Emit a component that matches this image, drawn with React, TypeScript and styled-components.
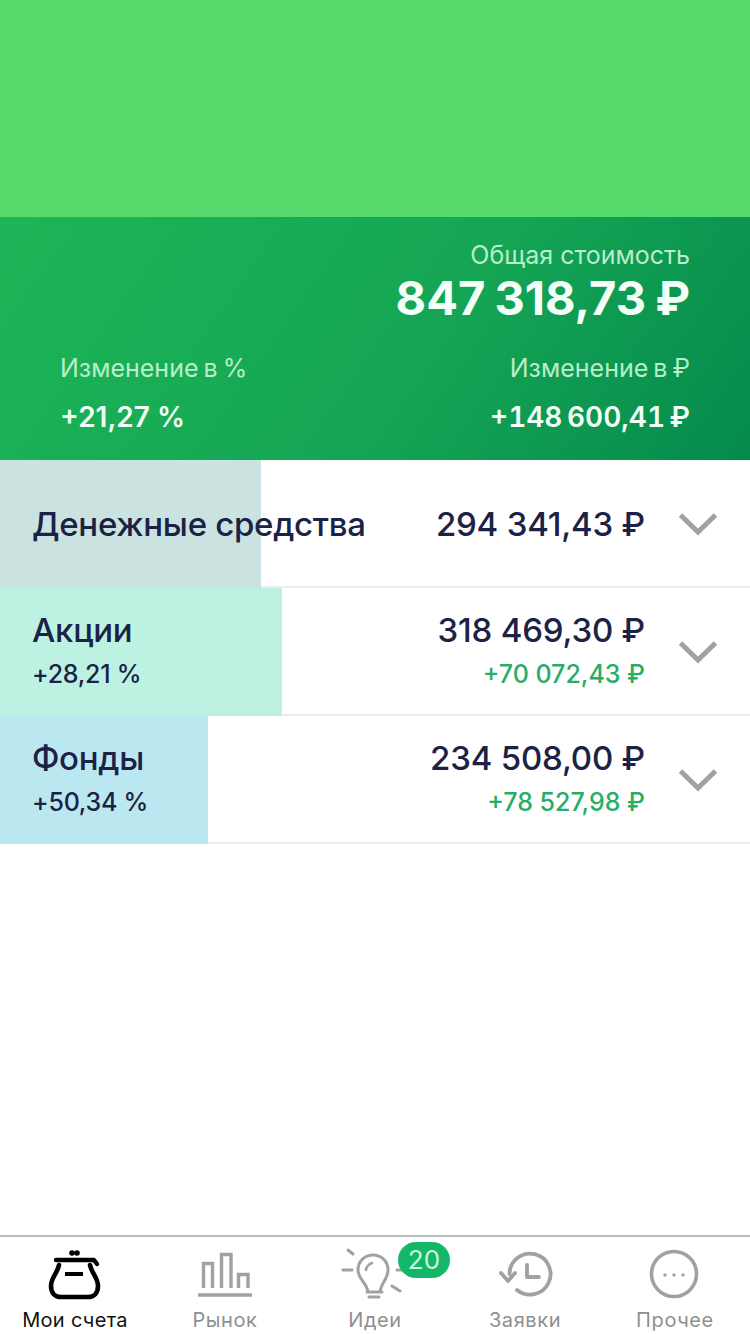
import React from "react";
import styled, { createGlobalStyle } from "styled-components";

const Global = createGlobalStyle`
  html, body { margin: 0; padding: 0; background: #fff; }
  body { font-family: Inter, "Noto Sans", sans-serif; }
  * { box-sizing: border-box; }
`;

const Page = styled.div`
  width: 750px;
  height: 1334px;
  display: flex;
  flex-direction: column;
  overflow: hidden;
  background: #fff;
`;
const Banner = styled.div`
  height: 217px;
  flex: none;
  background: #57da6c;
`;
const Summary = styled.section`
  height: 243px;
  flex: none;
  padding: 21px 60px 0;
  background: linear-gradient(125deg, #1db556 0%, #15a655 55%, #058a4c 100%);
  display: flex;
  flex-direction: column;
`;
const TotalBlock = styled.div`
  display: flex;
  flex-direction: column;
  align-items: flex-end;
`;
const SummaryLabel = styled.div`
  font-size: 25px;
  line-height: 34px;
  color: #b9eeca;
  white-space: nowrap;
`;
const ChangeLabel = styled(SummaryLabel)`
  word-spacing: -2px;
`;
const TotalValue = styled.div`
  font-size: 47px;
  line-height: 58px;
  font-weight: 700;
  word-spacing: -2px;
  color: #f4fff8;
  white-space: nowrap;
  margin-top: -3px;
`;
const ChangeGrid = styled.div`
  display: flex;
  justify-content: space-between;
  margin-top: 24px;
`;
const ChangeCol = styled.div<{ $end?: boolean }>`
  display: flex;
  flex-direction: column;
  gap: 15px;
  align-items: ${(p) => (p.$end ? "flex-end" : "flex-start")};
`;
const ChangeValue = styled.div<{ $tabular?: boolean }>`
  font-size: 28px;
  line-height: 34px;
  font-weight: 600;
  font-feature-settings: ${(p) => (p.$tabular ? '"tnum"' : "normal")};
  word-spacing: ${(p) => (p.$tabular ? "-3px" : "0")};
  color: #f0fff5;
  white-space: nowrap;
`;
const List = styled.div`
  flex: 1;
`;
const Row = styled.div<{ $fill: string; $w: number }>`
  height: 128px;
  display: flex;
  align-items: center;
  padding: 1px 32px 2px;
  background:
    linear-gradient(to right, ${(p) => p.$fill} ${(p) => p.$w}px, transparent ${(p) => p.$w}px),
    linear-gradient(#ececee, #ececee) left bottom / 100% 2px no-repeat;
`;
const Names = styled.div`
  flex: 1;
  display: flex;
  flex-direction: column;
  gap: 6px;
`;
const Values = styled.div`
  display: flex;
  flex-direction: column;
  align-items: flex-end;
  gap: 6px;
  margin-right: 33px;
`;
const Name = styled.div`
  font-size: 33px;
  line-height: 38px;
  font-weight: 550;
  letter-spacing: -0.3px;
  color: #1b2245;
  white-space: nowrap;
`;
const Pct = styled.div`
  font-size: 25px;
  line-height: 38px;
  font-weight: 450;
  letter-spacing: -0.25px;
  color: #1b2245;
  white-space: nowrap;
`;
const Amount = styled.div`
  font-size: 33px;
  line-height: 38px;
  font-weight: 550;
  letter-spacing: -0.2px;
  color: #1b2245;
  white-space: nowrap;
`;
const Gain = styled.div`
  font-size: 25px;
  line-height: 38px;
  font-weight: 500;
  color: #27ad66;
  white-space: nowrap;
`;
const Chevron = styled.svg`
  width: 40px;
  height: 24px;
  flex: none;
`;
const TabBar = styled.nav`
  height: 99px;
  flex: none;
  display: grid;
  grid-template-columns: repeat(5, 150px);
  border-top: 2px solid #b9b9b9;
  background: #fff;
`;
const Tab = styled.div`
  position: relative;
  display: flex;
  flex-direction: column;
  align-items: center;
  padding-top: 10px;
`;
const TabIcon = styled.svg`
  width: 60px;
  height: 54px;
  flex: none;
  overflow: visible;
`;
const TabLabel = styled.div<{ $active?: boolean }>`
  margin-top: 7px;
  font-size: 20px;
  line-height: 24px;
  font-weight: 400;
  letter-spacing: ${(p) => (p.$active ? "0.3px" : "0.6px")};
  color: ${(p) => (p.$active ? "#111" : "#8f8f8f")};
  white-space: nowrap;
`;
const Badge = styled.div`
  position: absolute;
  left: 98px;
  top: 5px;
  width: 52px;
  height: 36px;
  border-radius: 18px;
  background: #12b768;
  color: #c9f7da;
  font-size: 26px;
  line-height: 36px;
  text-align: center;
`;

const rows = [
  { name: "Денежные средства", amount: "294 341,43 ₽", fill: "#cbe3e0", w: 261 },
  { name: "Акции", pct: "+28,21 %", amount: "318 469,30 ₽", gain: "+70 072,43 ₽", fill: "#bdf2e3", w: 282 },
  { name: "Фонды", pct: "+50,34 %", amount: "234 508,00 ₽", gain: "+78 527,98 ₽", fill: "#bbe8f0", w: 208 },
];

const G = "#a1a1a1";

export default function App() {
  return (
    <Page>
      <Global />
      <Banner />
      <Summary>
        <TotalBlock>
          <SummaryLabel>Общая стоимость</SummaryLabel>
          <TotalValue>847 318,73 ₽</TotalValue>
        </TotalBlock>
        <ChangeGrid>
          <ChangeCol>
            <ChangeLabel>Изменение в %</ChangeLabel>
            <ChangeValue>+21,27 %</ChangeValue>
          </ChangeCol>
          <ChangeCol $end>
            <ChangeLabel>Изменение в ₽</ChangeLabel>
            <ChangeValue $tabular>+148 600,41 ₽</ChangeValue>
          </ChangeCol>
        </ChangeGrid>
      </Summary>
      <List>
        {rows.map((r) => (
          <Row key={r.name} $fill={r.fill} $w={r.w}>
            <Names>
              <Name>{r.name}</Name>
              {r.pct && <Pct>{r.pct}</Pct>}
            </Names>
            <Values>
              <Amount>{r.amount}</Amount>
              {r.gain && <Gain>{r.gain}</Gain>}
            </Values>
            <Chevron viewBox="0 0 40 24" fill="none">
              <path d="M2.5 3 L20 20 L37.5 3" stroke={G} strokeWidth="5" />
            </Chevron>
          </Row>
        ))}
      </List>
      <TabBar>
        <Tab>
          <TabIcon viewBox="0 0 60 54" fill="none">
            <circle cx="27" cy="6" r="2.8" fill="#000" />
            <circle cx="32" cy="6" r="2.8" fill="#000" />
            <path d="M11 13 H49 L52 17" stroke="#000" strokeWidth="4.4" strokeLinecap="round" strokeLinejoin="round" />
            <path
              d="M14 18 C12 27 6 31 6 39 C6 46 10 50 16 50 H43 C49 50 53 46 53 39 C53 31 47 27 45 18"
              stroke="#000"
              strokeWidth="4.6"
              strokeLinecap="round"
            />
            <path d="M20 27 H38" stroke="#000" strokeWidth="4" />
          </TabIcon>
          <TabLabel $active>Мои счета</TabLabel>
        </Tab>
        <Tab>
          <TabIcon viewBox="0 0 60 54" fill="none">
            <path d="M8.5 41 V16.5 H17.5 V41 M26.5 41 V7.5 H36 V41 M43.5 41 V27.5 H53 V41" stroke={G} strokeWidth="3.4" />
            <path d="M3 48 H57" stroke={G} strokeWidth="3.6" />
          </TabIcon>
          <TabLabel>Рынок</TabLabel>
        </Tab>
        <Tab>
          <TabIcon viewBox="0 0 60 54" fill="none">
            <path d="M3 3 L8 7 M-2 23 H7 M47 39 L55 44 M52 23 H56" stroke={G} strokeWidth="3" strokeLinecap="round" />
            <path
              d="M23 45 C22 36 13 32 13 23 C13 14 20 8 28 8 C36 8 43 14 43 23 C43 32 36 36 35 45"
              stroke={G}
              strokeWidth="3"
            />
            <path d="M21 23 C21 20 24 17 27 16" stroke={G} strokeWidth="2.6" strokeLinecap="round" />
            <path d="M22 45 H37 M24 50 H34" stroke={G} strokeWidth="3" strokeLinecap="round" />
          </TabIcon>
          <Badge>20</Badge>
          <TabLabel>Идеи</TabLabel>
        </Tab>
        <Tab>
          <TabIcon viewBox="0 0 60 54" fill="none">
            <path
              d="M14.5 27 A20.5 20.5 0 1 1 22 43"
              stroke={G}
              strokeWidth="3.8"
              strokeLinecap="round"
            />
            <path d="M6 26 L13 34 L20 26" stroke={G} strokeWidth="3.8" strokeLinecap="round" strokeLinejoin="round" />
            <path d="M32 18 V30 H44" stroke={G} strokeWidth="3.8" strokeLinecap="round" strokeLinejoin="round" />
          </TabIcon>
          <TabLabel>Заявки</TabLabel>
        </Tab>
        <Tab>
          <TabIcon viewBox="0 0 60 54" fill="none">
            <circle cx="29" cy="27" r="22.5" stroke={G} strokeWidth="3.6" />
            <circle cx="20" cy="28" r="1.7" fill={G} />
            <circle cx="29" cy="28" r="1.7" fill={G} />
            <circle cx="38" cy="28" r="1.7" fill={G} />
          </TabIcon>
          <TabLabel>Прочее</TabLabel>
        </Tab>
      </TabBar>
    </Page>
  );
}
